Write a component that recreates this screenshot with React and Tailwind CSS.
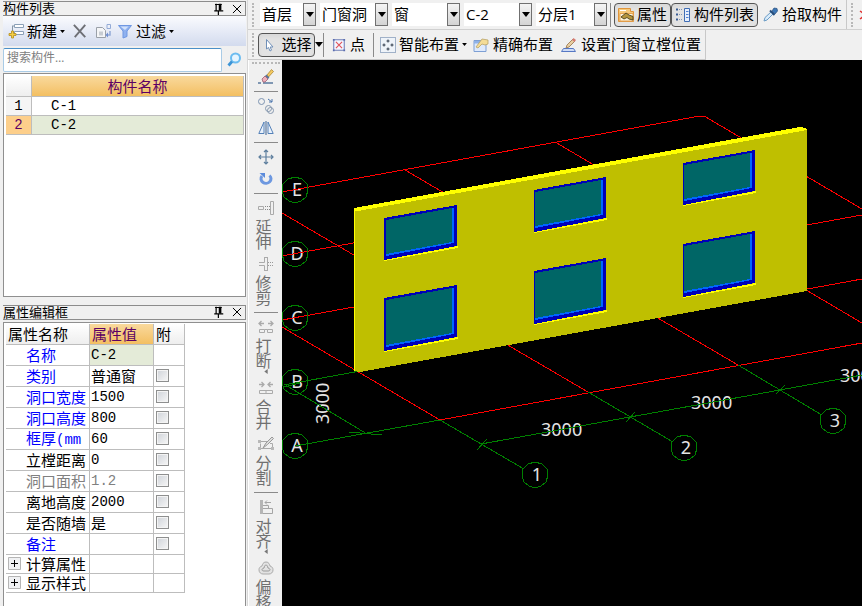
import { useState } from 'react'

const layers = [
    { label: '楼层', value: '首层', width: 'w-14' },
    { label: '构件类别', value: '门窗洞', width: 'w-[68px]' },
    { label: '构件类型', value: '窗', width: 'w-[68px]' },
    { label: '构件', value: 'C-2', width: 'w-[68px]' },
    { label: '分层', value: '分层1', width: 'w-[71px]' },
]

const properties = [
    { name: '名称', value: 'C-2', tone: 'text-[#0000ff]', selected: true },
    { name: '类别', value: '普通窗', tone: 'text-[#0000ff]', cjk: true, check: true },
    { name: '洞口宽度', value: '1500', tone: 'text-[#0000ff]', check: true },
    { name: '洞口高度', value: '800', tone: 'text-[#0000ff]', check: true },
    { name: '框厚', unit: '(mm', value: '60', tone: 'text-[#0000ff]', check: true },
    { name: '立樘距离', value: '0', tone: 'text-black', check: true },
    { name: '洞口面积', value: '1.2', tone: 'text-[#808080]', valueTone: 'text-[#808080]', check: true },
    { name: '离地高度', value: '2000', tone: 'text-black', check: true },
    { name: '是否随墙', value: '是', tone: 'text-black', cjk: true, check: true },
    { name: '备注', value: '', tone: 'text-[#0000ff]', check: true },
]

const windows = [
    { x: 384, y: 218, w: 73, h: 41, edge: 2 },
    { x: 534, y: 190, w: 72, h: 41, edge: 1 },
    { x: 683, y: 163, w: 72, h: 41, edge: 1 },
    { x: 384, y: 298, w: 73, h: 52, edge: 2 },
    { x: 534, y: 271, w: 72, h: 52, edge: 1 },
    { x: 683, y: 244, w: 72, h: 52, edge: 1 },
]

const bubbles = [
    { t: 'E', x: 295, y: 190 },
    { t: 'D', x: 295, y: 254 },
    { t: 'C', x: 295, y: 318 },
    { t: 'B', x: 295, y: 382 },
    { t: 'A', x: 295, y: 446 },
    { t: '1', x: 535, y: 475 },
    { t: '2', x: 684, y: 448 },
    { t: '3', x: 833, y: 421 },
]

function Icon({ children, className = 'size-4' }) {
    return (
        <svg viewBox="0 0 16 16" fill="none" className={`shrink-0 ${className}`} aria-hidden="true">
            {children}
        </svg>
    )
}

const NewIcon = () => (
    <Icon>
        <path d="M6.500 1.500h9v3h-9zM6.500 8.500h9v3h-9z" fill="#fff" stroke="#8ba0b8" />
        <path d="M4 3h2M4.500 3v7h2" stroke="#8797a8" />
        <path d="M3.500 8h2v2.500H8v2H5.500V15h-2v-2.500H1v-2h2.500z" fill="#f5cf45" stroke="#b58d1b" strokeWidth=".8" />
    </Icon>
)

const DeleteIcon = () => (
    <Icon className="size-3.5">
        <path d="M1 1l13 14M14 1L2 15" stroke="#6e7076" strokeWidth="2.200" />
    </Icon>
)

const CopyIcon = () => (
    <Icon>
        <path d="M1.500 4.500h6l3 3v7h-9z" fill="#f4f5f7" stroke="#9aa0a8" />
        <path d="M4 8.500h4v4H4z" fill="#c7ccd2" />
        <path d="M12 1.500h3.500v4H12z" stroke="#93aad6" />
        <path d="M12 12h3V8" stroke="#93aad6" strokeWidth="1.500" />
        <path d="M13 9.500L10.500 12l2.500 2.500z" fill="#6f8fd0" />
    </Icon>
)

const FilterIcon = () => (
    <Icon>
        <path d="M1.500 2.500h13L10 8v5.500l-4 1.500V8z" fill="#8fb1ef" stroke="#6f97e2" />
        <path d="M3.500 3.500h8L8 7z" fill="#d2e1fb" />
    </Icon>
)

const SearchIcon = () => (
    <Icon>
        <circle cx="9.500" cy="6" r="4.500" fill="#e6f5ff" stroke="#6cbcf0" strokeWidth="2" />
        <path d="M6 9.500L2.500 13.500" stroke="#3c94d6" strokeWidth="2.800" />
    </Icon>
)

const PinIcon = () => (
    <Icon className="size-3">
        <path d="M4 2h9M5.500 1v9M3 10.500h12M8.500 11v5" stroke="#000" strokeWidth="1.600" />
        <path d="M9 1h3.500v9H9z" fill="#000" />
    </Icon>
)

const CloseIcon = () => (
    <Icon className="size-2.5">
        <path d="M1.500 1.500l13 13M14.500 1.500l-13 13" stroke="#000" strokeWidth="1.600" />
    </Icon>
)

const PropsIcon = () => (
    <Icon>
        <path d="M.5 1.500h12v3h3v10H.5z" fill="#f6c97b" stroke="#e0953c" />
        <path d="M2 6.500h13v7.500H2z" fill="#fff6e0" stroke="#e3a455" />
        <path d="M3 10l5-4 3 2 4 1.500v3.500l-4-1-2-1.500L6 12z" fill="#b5953e" stroke="#4d431c" strokeWidth=".9" />
        <path d="M2 3.500h6" stroke="#fff" />
    </Icon>
)

const ListIcon = () => (
    <Icon>
        <path d="M9.500 1.500h5v13h-5z" fill="#e6eefb" stroke="#3f6db4" />
        <path d="M11 4.500h2.500M11 7.500h2.500M11 10.500h2.500" stroke="#4e7fce" />
        <path d="M1 2.500h2M1 7.500h2M1 12.500h2" stroke="#3a5c93" strokeWidth="2" />
        <path d="M4 2.500h4M4 7.500h4M4 12.500h4" stroke="#7f94b4" strokeDasharray="1 1" />
    </Icon>
)

const PickIcon = () => (
    <Icon>
        <path d="M2 14l1-3.500L9 5l2 2-6 6z" fill="#d8ebfa" stroke="#6b9cc6" />
        <path d="M8 3.500l4.500 4.500" stroke="#274e7c" strokeWidth="2" />
        <path d="M10 4l2-3 3 .5.5 2.500L13 7z" fill="#3c77b6" stroke="#274e7c" strokeWidth=".7" />
    </Icon>
)

const CursorIcon = () => (
    <Icon>
        <path d="M5.500 2.500v9.500L7.500 10.500 9 14l1.500-.8L9.200 10h2.800z" fill="#fff" stroke="#6f8fb8" />
    </Icon>
)

const PointIcon = () => (
    <Icon className="size-3.5">
        <path d="M2 2h12v12H2z" fill="#f4f6ff" stroke="#6f7fb8" strokeWidth="1.200" />
        <path d="M4.500 4.500l7 7M11.500 4.500l-7 7" stroke="#e0525a" strokeWidth="1.300" />
        <path d="M1 1h2v2H1zM13 1h2v2h-2zM1 13h2v2H1zM13 13h2v2h-2z" fill="#5b6db0" />
    </Icon>
)

const SmartIcon = () => (
    <Icon>
        <path d="M.5.5h15v15H.5z" fill="#eef3f9" stroke="#50709c" strokeDasharray="1 1" />
        <path d="M8 2.500v3M6.500 4h3M8 10.500v3M6.500 12h3M4 6.500v3M2.500 8h3M12 6.500v3M10.500 8h3" stroke="#2f3b4a" />
    </Icon>
)

const ExactIcon = () => (
    <Icon>
        <path d="M1 3.500h12v11H1z" fill="#dfeafc" stroke="#7d9fd4" />
        <path d="M1 4h12v2.500H1z" fill="#8fb2e8" />
        <path d="M3 10l6-8 6 1v4l-3 1-3-1-4 4z" fill="#f4dc97" stroke="#b9a368" strokeWidth=".8" />
    </Icon>
)

const PenIcon = () => (
    <Icon>
        <path d="M2.500 11.500h10l2 3H.5z" fill="#cfdcf6" stroke="#5678c4" />
        <path d="M5 11l1-3 6-6 2 2-6 6z" fill="#e9cfa0" stroke="#92704a" strokeWidth=".8" />
        <path d="M11 3l1.500-2L15 3l-1.500 2z" fill="#d57b71" />
    </Icon>
)

// Line tool, mostly hidden past the right end of the bar
const LineIcon = () => (
    <Icon>
        <path d="M1 4l3 2M1 12l4-3" stroke="#e03030" strokeWidth="1.500" />
    </Icon>
)

const BrushIcon = () => (
    <Icon>
        <path d="M0 14h3M5 14h10" stroke="#5a7a9e" strokeWidth="1.500" />
        <path d="M9 6l4.500-5.500 2 2L10.500 8z" fill="#f3ca62" stroke="#a47b27" strokeWidth=".7" />
        <path d="M7.500 6.500l3 3" stroke="#58769d" strokeWidth="2.500" />
        <path d="M4 10l3-3 3 3-3 3H5z" fill="#eeb0bb" stroke="#9c6174" strokeWidth=".8" />
    </Icon>
)

const DuplicateIcon = () => (
    <Icon>
        <circle cx="3.500" cy="3.500" r="3" stroke="#7c93b0" />
        <path d="M10 1l4 3M14 1v3h-3" stroke="#4a75ac" />
        <circle cx="10.500" cy="10.500" r="3" stroke="#8497ae" />
        <circle cx="12.500" cy="12.500" r="3" stroke="#8497ae" />
    </Icon>
)

const MirrorIcon = () => (
    <Icon>
        <path d="M6 2v11.500H.8zM10 2v11.500h5.200z" fill="#e9f1fb" stroke="#5481b8" />
        <path d="M8 1v14" stroke="#3d6292" />
    </Icon>
)

const MoveIcon = () => (
    <Icon>
        <path d="M8 1v14M1 8h14M6 3l2-2 2 2M6 13l2 2 2-2M3 6L1 8l2 2M13 6l2 2-2 2" stroke="#5e7f9e" strokeWidth="1.200" />
    </Icon>
)

const RotateIcon = () => (
    <Icon>
        <path d="M11.500 4.500A5 4.500 0 1 1 4 5" stroke="#6d98e0" strokeWidth="3" />
        <path d="M1.500 2H7v5z" fill="#5b8bdb" />
    </Icon>
)

const ExtendIcon = () => (
    <Icon>
        <path d="M12.500 1.500h3v13h-3zM.5 6.500h5v3h-5z" stroke="#aaa" />
        <path d="M7 6.500h5M7 9.500h5" stroke="#888" strokeDasharray="1 1" />
    </Icon>
)

const TrimIcon = () => (
    <Icon>
        <path d="M6.500 1v5.500H1M1 9.500h5.500V15M9.500 1v14M6.500 1.500h3M6.500 14.500h3" stroke="#aaa" />
        <path d="M10 6.500h6M10 9.500h6" stroke="#999" strokeDasharray="1 1" />
    </Icon>
)

const BreakIcon = () => (
    <Icon>
        <path d="M6 4.500H1M3.500 2L1 4.500 3.500 7M10 4.500h5M12.500 2L15 4.500 12.500 7" stroke="#aaa" strokeWidth="1.300" />
        <path d="M1.500 10.500h5v3h-5zM9.500 10.500h5v3h-5zM6.500 10.500h3" stroke="#aaa" />
    </Icon>
)

const MergeIcon = () => (
    <Icon>
        <path d="M1 4.500h5M3.500 2L6 4.500 3.500 7M15 4.500h-5M12.500 2L10 4.500 12.500 7" stroke="#aaa" strokeWidth="1.300" />
        <path d="M1.500 10.500h13v3h-13zM8 10.500v3" stroke="#aaa" />
    </Icon>
)

const SplitIcon = () => (
    <Icon>
        <path d="M1.500 5.500h8M12 7.500h2.500v5h-12v-5" stroke="#aaa" />
        <path d="M0 4h3v3H0zM0 11h3v3H0zM13 11h3v3h-3z" fill="#b8b8b8" />
        <path d="M5 12l3-5 6-6 1.500 1.500-6 6z" fill="#ddd" stroke="#999" />
    </Icon>
)

const AlignIcon = () => (
    <Icon>
        <path d="M2 1v14h3V1z" fill="#b5b5b5" />
        <path d="M5 9.500h9.500v5H5M5 6.500h5.500v3M13 3.500H7M9 1.500l-2 2 2 2" stroke="#a5a5a5" />
    </Icon>
)

const OffsetIcon = () => (
    <Icon>
        <path d="M8 2c3 0 3.500 2.500 4 4 3 1 3 3 3 4 0 2.500-2 4-4 4H5c-2 0-4-1.500-4-4 0-1 0-3 3-4 .5-1.500 1-4 4-4z" fill="#e2e2e2" stroke="#aaa" />
        <path d="M8 5c1 0 1.500 1 2 3 1.500.5 2 1 2 1.700S11.500 11 10 11H6c-1.500 0-2-.6-2-1.300S4.500 8.500 6 8c.5-2 1-3 2-3z" stroke="#999" />
    </Icon>
)

function Arrow({ className = 'w-2 h-[5px]' }) {
    return (
        <svg viewBox="0 0 8 5" className={`shrink-0 ${className}`} aria-hidden="true">
            <path d="M0 0h8L4 5z" fill="#000" />
        </svg>
    )
}

function Separator() {
    return <span className="h-6 w-px shrink-0 bg-[#8a8a8a]" />
}

function Grip() {
    return <span className="h-6 shrink-0 border-l-2 border-dotted border-[#b8b8b8]" />
}

function PanelTitle({ children }) {
    return (
        <header className="flex h-[15px] shrink-0 items-center border border-l-0 border-[#8c8c8c] bg-[#f0f0f0] pr-[3px]">
            <h2 className="flex-1 text-[13px] leading-[13px]">{children}</h2>
            <button aria-label="固定" className="mr-2"><PinIcon /></button>
            <button aria-label="关闭"><CloseIcon /></button>
        </header>
    )
}

function Combo({ label, value, width }) {
    return (
        <div className={`relative h-[23px] shrink-0 bg-white ${width}`}>
            <select aria-label={label} className="h-full w-full appearance-none bg-white pl-[2px] leading-[23px] outline-none">
                <option>{value}</option>
            </select>
            <span className="pointer-events-none absolute inset-y-0 right-0 flex w-[13px] items-center justify-center border border-[#707070] bg-linear-to-b from-[#f4f4f4] to-[#d4d4d4]">
                <Arrow />
            </span>
        </div>
    )
}

function ComponentList() {
    const [selected, setSelected] = useState('C-2')

    return (
        <section className="flex h-[49%] shrink-0 flex-col pt-px">
            <PanelTitle>构件列表</PanelTitle>
            <div className="flex h-[30px] shrink-0 items-center bg-linear-to-b from-[#fafbfe] to-[#d3dbee] pl-[5px] text-[15px]">
                <button className="mr-2 flex items-center gap-[3px]"><NewIcon />新建<Arrow className="h-[3px] w-[5px]" /></button>
                <button aria-label="删除" className="mr-2"><DeleteIcon /></button>
                <button aria-label="复制" className="mr-[6px]"><CopyIcon /></button>
                <button className="flex items-center gap-[3px]"><FilterIcon />过滤<Arrow className="h-[3px] w-[5px]" /></button>
            </div>
            <div className="flex h-[27px] shrink-0 items-center">
                <input
                    aria-label="搜索构件"
                    placeholder="搜索构件…"
                    className="h-6 min-w-0 flex-1 rounded-xs border border-[#a9cbe6] border-t-[#4a90c8] bg-white px-[3px] pb-1 text-xs outline-none placeholder:text-[#808080]"
                />
                <button aria-label="搜索" className="mx-1"><SearchIcon /></button>
            </div>
            <div className="min-h-0 flex-1 border border-[#8f8f8f] bg-white p-[2px] pr-px">
                <table className="w-full table-fixed border-separate border-spacing-0 text-[15px] leading-[18px]">
                    <colgroup>
                        <col className="w-[26px]" />
                        <col />
                    </colgroup>
                    <thead>
                        <tr className="h-[21px]">
                            <th className="border-r border-b border-[#bdbdbd] bg-linear-to-b from-white to-[#eeeeee]" />
                            <th className="border-r border-b border-[#bdbdbd] bg-linear-to-b from-[#f9d99c] to-[#f3bf61] font-normal text-[#5c0064]">构件名称</th>
                        </tr>
                    </thead>
                    <tbody>
                        {['C-1', 'C-2'].map((name, i) => (
                            <tr key={name} onClick={() => setSelected(name)} className="h-[19px] font-['Liberation_Mono',monospace] text-sm leading-[18px]">
                                <td className={`border-r border-b border-[#bdbdbd] text-center ${selected === name ? 'bg-[#fdcf8b] text-[#5c0064]' : 'bg-[#f5f5f5]'}`}>{i + 1}</td>
                                <td className={`border-r border-b border-[#bdbdbd] pl-[19px] ${selected === name ? 'bg-[#e4ebd8]' : ''}`}>{name}</td>
                            </tr>
                        ))}
                    </tbody>
                </table>
            </div>
        </section>
    )
}

function PropertyEditor() {
    return (
        <section className="mt-2 flex min-h-0 flex-1 flex-col">
            <PanelTitle>属性编辑框</PanelTitle>
            <div className="mt-[2px] min-h-0 flex-1 overflow-hidden border border-b-0 border-[#8f8f8f] bg-white px-[2px] pt-px">
                <table className="w-[179px] table-fixed border-separate border-spacing-0 text-[15px] leading-[18px] [&_td]:border-r [&_td]:border-b [&_td]:border-[#bdbdbd] [&_td]:whitespace-nowrap [&_th]:border-r [&_th]:border-b [&_th]:border-[#bdbdbd] [&_th]:text-left [&_th]:font-normal">
                    <colgroup>
                        <col className="w-[84px]" />
                        <col className="w-16" />
                        <col className="w-[31px]" />
                    </colgroup>
                    <thead>
                        <tr className="h-[21px]">
                            <th className="bg-linear-to-b from-white to-[#eeeeee] pl-[2px]">属性名称</th>
                            <th className="bg-linear-to-b from-[#f9d99c] to-[#f3bf61] pl-[2px] text-[#5c0064]">属性值</th>
                            <th className="bg-linear-to-b from-white to-[#eeeeee] pl-[2px]">附</th>
                        </tr>
                    </thead>
                    <tbody>
                        {properties.map((p) => (
                            <tr key={p.name} className="h-[21px]">
                                <td className={`pl-5 ${p.tone}`}>
                                    {p.name}
                                    {p.unit && <span className="font-['Liberation_Mono',monospace] text-sm leading-[18px]">{p.unit}</span>}
                                </td>
                                <td className={`pl-px ${p.selected ? 'bg-[#e4ebd8]' : ''} ${p.valueTone || ''} ${p.cjk ? '' : "font-['Liberation_Mono',monospace] text-sm leading-[18px]"}`}>
                                    {p.value}
                                </td>
                                <td className="pl-[2px]">
                                    {p.check && (
                                        <input
                                            type="checkbox"
                                            aria-label={`附加${p.name}`}
                                            className="block size-[13px] appearance-none border border-[#8e8f8f] bg-linear-to-br from-[#cfd3d9] to-[#f7f7f7] inset-ring inset-ring-[#f4f4f4]"
                                        />
                                    )}
                                </td>
                            </tr>
                        ))}
                        {['计算属性', '显示样式'].map((name) => (
                            <tr key={name} className="h-[19px]">
                                <td>
                                    <button className="flex items-center gap-[5px] pl-[2px]">
                                        <svg viewBox="0 0 13 13" className="size-[13px]" aria-hidden="true">
                                            <path d="M.5.5h12v12H.5z" fill="#f0f1f3" stroke="#b5b5b5" />
                                            <path d="M3 6.500h7M6.500 3v7" stroke="#000" />
                                        </svg>
                                        {name}
                                    </button>
                                </td>
                                <td />
                                <td />
                            </tr>
                        ))}
                    </tbody>
                </table>
            </div>
        </section>
    )
}

function TopToolbars() {
    return (
        <div className="shrink-0 overflow-hidden text-[15px] whitespace-nowrap">
            <div className="flex h-[30px] items-center border-b border-[#d0d0d0] pl-1">
                <Grip />
                <div className="ml-[6px] flex gap-1">
                    {layers.map((l) => <Combo key={l.label} {...l} />)}
                </div>
                <span className="mx-[3px] flex"><Separator /></span>
                <button className="flex h-6 w-[57px] shrink-0 items-center justify-center gap-[3px] rounded-sm border border-[#555] bg-[#e2e2e2] inset-shadow-sm"><PropsIcon />属性</button>
                <button className="flex h-6 w-[87px] shrink-0 items-center justify-center gap-[3px] rounded-sm border border-[#555] bg-[#e2e2e2] inset-shadow-sm"><ListIcon />构件列表</button>
                <button className="ml-1 flex shrink-0 items-center gap-1"><PickIcon />拾取构件</button>
                <span className="ml-1 h-full w-px shrink-0 bg-[#c8c8c8]" />
                <span className="ml-1 flex"><Grip /></span>
                <button aria-label="直线" className="ml-[6px]"><LineIcon /></button>
            </div>
            <div className="flex h-[30px]">
                <div className="flex items-center border-r border-b border-[#c8c8c8] pr-1 pl-1">
                    <Grip />
                    <button className="ml-1 flex h-6 w-[57px] shrink-0 items-center justify-center gap-1 rounded-sm border border-[#555] bg-[#e2e2e2] inset-shadow-sm"><CursorIcon />选择</button>
                    <button aria-label="选择方式"><Arrow /></button>
                    <Separator />
                    <button className="mx-2 flex items-center gap-1"><PointIcon />点</button>
                    <Separator />
                    <button className="ml-[6px] flex items-center gap-[3px]"><SmartIcon />智能布置<Arrow className="h-[3px] w-[5px]" /></button>
                    <button className="ml-[6px] flex items-center gap-1"><ExactIcon />精确布置</button>
                    <button className="ml-2 flex items-center gap-1"><PenIcon />设置门窗立樘位置</button>
                </div>
            </div>
        </div>
    )
}

function SideTool({ icon, label, name, more }) {
    return (
        <button aria-label={name} className="flex shrink-0 flex-col items-center text-[#707070]">
            {icon}
            {label && <span className="mt-1 mr-1 w-4 text-base leading-[15px] break-all">{label}</span>}
            {more && (
                <svg viewBox="0 0 4 6" className="h-[5px] w-1" aria-hidden="true">
                    <path d="M4 0v6L0 3z" fill="#777" />
                </svg>
            )}
        </button>
    )
}

function SideSeparator() {
    return <hr className="w-6 shrink-0 border-[#8a8a8a]" />
}

function SideToolbar() {
    return (
        <nav aria-label="修改" className="flex w-[34px] shrink-0 flex-col items-center overflow-hidden border-l border-white pt-[2px]">
            <span className="mb-[5px] w-7 shrink-0 border-t-2 border-dotted border-[#b8b8b8]" />
            <div className="flex flex-col items-center gap-[6px]">
                <SideTool name="删除" icon={<BrushIcon />} />
                <SideSeparator />
                <SideTool name="复制" icon={<DuplicateIcon />} />
                <SideTool name="镜像" icon={<MirrorIcon />} />
                <SideSeparator />
                <SideTool name="移动" icon={<MoveIcon />} />
                <SideTool name="旋转" icon={<RotateIcon />} />
                <SideSeparator />
                <SideTool label="延伸" icon={<ExtendIcon />} />
                <SideTool label="修剪" icon={<TrimIcon />} />
                <SideSeparator />
                <SideTool label="打断" icon={<BreakIcon />} more />
                <SideTool label="合并" icon={<MergeIcon />} />
                <SideTool label="分割" icon={<SplitIcon />} />
                <SideSeparator />
                <SideTool label="对齐" icon={<AlignIcon />} more />
                <SideTool label="偏移" icon={<OffsetIcon />} />
            </div>
        </nav>
    )
}

// Window opening in the wall, sheared along the wall direction
function WallWindow({ x, y, w, h, edge }) {
    const r = x + w
    const d = 13
    return (
        <g>
            <path d={`M${x} ${y + h}L${r + 1} ${y + h - d}v2L${x} ${y + h + 2}z`} fill="#ffff00" />
            <path d={`M${x} ${y}L${r} ${y - d}V${y + h - d}L${x} ${y + h + 1}z`} fill="#0000b8" />
            <path d={`M${x + edge} ${y + 2}L${r - 3} ${y + 3 - d}V${y + h - d - 3}L${x + edge} ${y + h - 3}z`} fill="#0066ff" />
            <path d={`M${x + edge} ${y + 2}L${r - 5} ${y + 3 - d}V${y + h - d - 4}L${x + edge} ${y + h - 5}z`} fill="#006666" />
        </g>
    )
}

function Viewport() {
    return (
        <main className="min-w-0 flex-1 bg-black">
            <svg viewBox="282 60 580 546" preserveAspectRatio="xMinYMin slice" className="block h-full w-full" role="img" aria-label="三维视图">
                <g fill="#e4e4e4" fontSize="18" fontFamily="'Noto Sans', 'Open Sans', sans-serif">
                    {bubbles.map((b) => <text key={b.t} x={b.x + 2} y={b.y + 6} textAnchor="middle">{b.t}</text>)}
                    <text x="541" y="436">3000</text>
                    <text x="691" y="409">3000</text>
                    <text x="840" y="382">3000</text>
                    <text transform="translate(329 424) rotate(-90)">3000</text>
                </g>
                <g fill="none" shapeRendering="crispEdges">
                    <g stroke="#ff0000">
                        <path d="M282 192L700 116h4L862 209" />
                        <path d="M282 256L787 164M282 320L862 215M360 371L862 279M440 420L862 343" />
                        <path d="M282 213L588 392M405 170L738 365M555 142L862 323M282 327L440 420" />
                    </g>
                    <g stroke="#008000">
                        <path d="M284 385L360 371M284 384L367 434M284 387L300 383M295 446L440 420M349 432L382 435" />
                        <path d="M440 420L524 469M588 392L673 442M738 365L822 415" />
                        <path d="M481 444L630 417L780 390L862 375" />
                        <path d="M477 450L487 439M626 422L635 412M776 394L785 385" />
                        {bubbles.map((b) => (
                            <path key={b.t} d={`M${b.x} ${b.y - 13}l7 2 5 5 1 6-2 7-5 4-6 2-6-2-5-4-2-7 1-6 5-5z`} />
                        ))}
                    </g>
                </g>
                <g shapeRendering="crispEdges">
                    <path d="M354 208L807 129V291L360 372L354 371z" fill="#bfbf00" />
                    <path d="M354 208L800 127L806 128L807 130L358 211L355 211V371h-1z" fill="#ffff00" />
                    {windows.map((w) => <WallWindow key={`${w.x}-${w.y}`} {...w} />)}
                </g>
            </svg>
        </main>
    )
}

export default function App() {
    return (
        <div className="flex h-screen overflow-hidden bg-[#f0f0f0] font-['Open_Sans','Noto_Sans_CJK_SC',sans-serif] text-black">
            <aside className="flex w-[248px] shrink-0 flex-col border-r border-[#d8d8d8] pr-px pl-[3px]">
                <ComponentList />
                <PropertyEditor />
            </aside>
            <div className="flex min-w-0 flex-1 flex-col">
                <TopToolbars />
                <div className="flex min-h-0 flex-1">
                    <SideToolbar />
                    <Viewport />
                </div>
            </div>
        </div>
    )
}
